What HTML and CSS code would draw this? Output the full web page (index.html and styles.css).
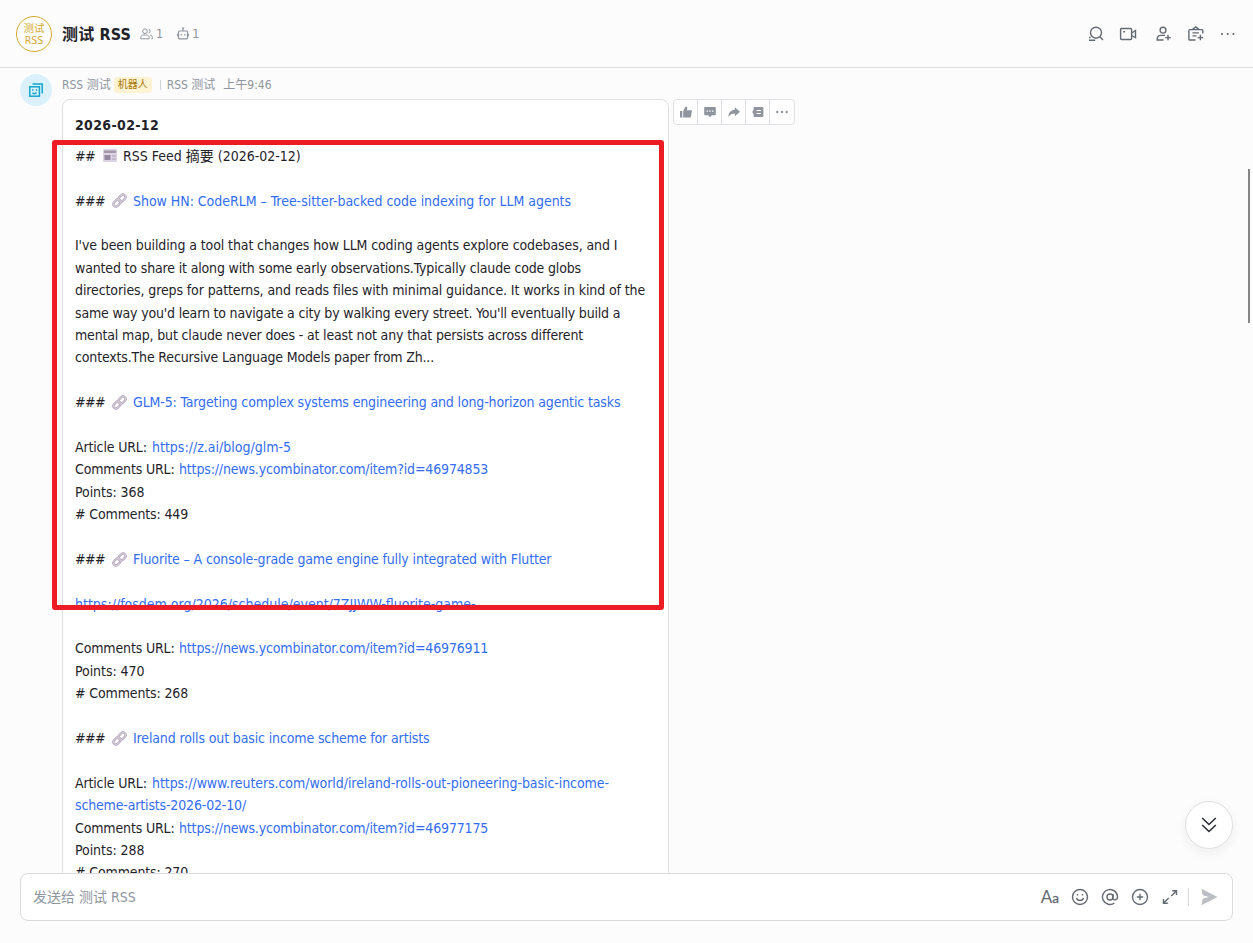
FILE: index.html
```html
<!DOCTYPE html>
<html lang="zh-CN">
<head>
<meta charset="utf-8">
<title>测试 RSS</title>
<link rel="stylesheet" href="styles.css">
</head>
<body>
<svg class="defs" width="0" height="0" aria-hidden="true">
  <symbol id="link" viewBox="0 0 15 15"><g fill="none" stroke-linecap="round"><g stroke="#a99bb1" stroke-width="2.200"><rect x="6" y="2.600" width="8" height="5" rx="2.500" transform="rotate(-45 10 5.100)"/><rect x="1" y="7.400" width="8" height="5" rx="2.500" transform="rotate(-45 5 9.900)"/></g><g stroke="#d3c8d9" stroke-width="1.200"><rect x="6" y="2.600" width="8" height="5" rx="2.500" transform="rotate(-45 10 5.100)"/><rect x="1" y="7.400" width="8" height="5" rx="2.500" transform="rotate(-45 5 9.900)"/></g></g></symbol>
</svg>
<header class="header">
  <div class="group-avatar"><span>测试</span><span>RSS</span></div>
  <h1 class="title">测试 RSS</h1>
  <div class="count members">
    <svg width="13" height="12" viewBox="0 0 13 12" fill="none" stroke="#8f959e"><circle cx="5" cy="3.200" r="2.300"/><path d="M.8 10.800V9.600c0-1.700 1.200-2.600 2.800-2.600h2.800c1.600 0 2.800.9 2.800 2.600v1.200zM8.600 1.200a2 2 0 0 1 0 3.900M10.200 7.200c1.400.2 2.200 1.100 2.200 2.300v1.300h-1"/></svg><span>1</span>
  </div>
  <div class="count bots">
    <svg width="12" height="13" viewBox="0 0 12 13" fill="none" stroke="#8f959e" stroke-width="1.200"><rect x="1.500" y="4" width="9" height="7.800" rx="1"/><path d="M6 4V.8M4.800 1h2.400M.5 6.800v2.400M11.500 6.800v2.400M4.200 7v1.500M7.800 7v1.500"/></svg><span>1</span>
  </div>
  <nav class="actions">
    <svg width="18" height="18" viewBox="0 0 18 18"><circle cx="9" cy="7.700" r="5.500"/><path d="M12.900 11.800 16 14.900M2 12.500h1.600M2 15.300h6.200"/></svg>
    <svg width="18" height="18" viewBox="0 0 18 18"><rect x="1.600" y="3.500" width="11" height="11" rx="1"/><path d="M12.600 8 16.500 5.500v7l-3.900-2M4.300 6.700h1.800"/></svg>
    <svg width="18" height="18" viewBox="0 0 18 18"><circle cx="8" cy="5.200" r="2.900"/><path d="M8.500 15H2.200v-1c0-2.400 1.600-3.600 3.800-3.600h4M13 9.800v5.500M10.200 12.600h5.600"/></svg>
    <svg width="18" height="18" viewBox="0 0 18 18"><path d="M8.500 15H2.700c-.5 0-.8-.3-.8-.8V5.400c0-.5.300-.8.800-.8h12.300c.5 0 .8.300.8.800v3M5.300 4.600 8.700 2l3.500 2.600M5.500 7.900h6.400M5.500 10.900h4M13.400 9.800v5.500M10.600 12.600h5.600"/></svg>
    <svg width="18" height="18" viewBox="0 0 18 18"><g class="solid"><circle cx="3" cy="9" r="1.100"/><circle cx="8.700" cy="9" r="1.100"/><circle cx="14.400" cy="9" r="1.100"/></g></svg>
  </nav>
</header>
<main class="feed">
  <div class="bot-avatar"><svg width="16" height="16" viewBox="0 0 16 16" fill="none" stroke="#14a5cf" stroke-width="1.500"><path d="M4.500 2h9.700v9.500"/><rect x="1.800" y="4.800" width="9.600" height="9.400"/><path d="M4 8h1.500M7.800 8h1.500M4.400 10.800c1.500 1.200 3 1.200 4.200-.2"/></svg></div>
  <section class="message">
    <div class="meta"><span>RSS 测试</span><span class="badge">机器人</span><i class="bar"></i><span>RSS 测试</span><time>上午9:46</time></div>
    <div class="row">
      <article class="card">
        <h2>2026-02-12</h2>
        <p><span class="h">##</span><svg class="news" width="14" height="13" viewBox="0 0 14 13"><rect width="14" height="13" rx="1" fill="#ddd4e3"/><path d="M1 1.500h12v2.500H1z" fill="#a397ab"/><path d="M1.500 6h6v5h-6z" fill="#94899e"/><path d="M9 6h4v2H9zM9 9h4v2H9z" fill="#c3b9cb"/></svg><span>RSS Feed 摘要 (2026-02-12)</span></p>
        <p></p>
        <p><span class="h">###</span><svg class="chain"><use href="#link"/></svg><a class="t1">Show HN: CodeRLM – Tree-sitter-backed code indexing for LLM agents</a></p>
        <p></p>
        <p><span class="t3">I've been building a tool that changes how LLM coding agents explore codebases, and I</span></p>
        <p><span class="t5">wanted to share it along with some early observations.Typically claude code globs</span></p>
        <p><span class="t3">directories, greps for patterns, and reads files with minimal guidance. It works in kind of the</span></p>
        <p><span class="t6">same way you'd learn to navigate a city by walking every street. You'll eventually build a</span></p>
        <p><span class="t5">mental map, but claude never does - at least not any that persists across different</span></p>
        <p><span class="t5">contexts.The Recursive Language Models paper from Zh...</span></p>
        <p></p>
        <p><span class="h">###</span><svg class="chain"><use href="#link"/></svg><a class="t4">GLM-5: Targeting complex systems engineering and long-horizon agentic tasks</a></p>
        <p></p>
        <p><span class="k article">Article URL:</span><a>https://z.ai/blog/glm-5</a></p>
        <p><span class="k">Comments URL:</span><a class="t5">https://news.ycombinator.com/item?id=46974853</a></p>
        <p><span class="t2">Points: 368</span></p>
        <p><span class="t4"># Comments: 449</span></p>
        <p></p>
        <p><span class="h">###</span><svg class="chain"><use href="#link"/></svg><a class="t4">Fluorite – A console-grade game engine fully integrated with Flutter</a></p>
        <p></p>
        <p><a>https://fosdem.org/2026/schedule/event/7ZJJWW-fluorite-game-</a></p>
        <p></p>
        <p><span class="k">Comments URL:</span><a class="t5">https://news.ycombinator.com/item?id=46976911</a></p>
        <p><span class="t2">Points: 470</span></p>
        <p><span class="t4"># Comments: 268</span></p>
        <p></p>
        <p><span class="h">###</span><svg class="chain"><use href="#link"/></svg><a class="t4">Ireland rolls out basic income scheme for artists</a></p>
        <p></p>
        <p><span class="k article">Article URL:</span><a class="t2">https://www.reuters.com/world/ireland-rolls-out-pioneering-basic-income-</a></p>
        <p><a class="t5">scheme-artists-2026-02-10/</a></p>
        <p><span class="k">Comments URL:</span><a class="t5">https://news.ycombinator.com/item?id=46977175</a></p>
        <p><span class="t2">Points: 288</span></p>
        <p><span class="t4"># Comments: 270</span></p>
      </article>
      <div class="toolbar">
        <span><svg width="12" height="12" viewBox="0 0 12 12"><path d="M0 5h2.300v6.500H0zM3.200 5 5.500.5c1.400 0 2 .9 1.700 2.200L7 4.200h4c.6 0 1 .5.9 1.100l-1 5.400c-.1.500-.5.800-1 .8H3.200z"/></svg></span>
        <span><svg width="12" height="12" viewBox="0 0 12 12"><path fill-rule="evenodd" d="M1 1h10c.5 0 .8.300.8.800v6.600c0 .5-.3.800-.8.800H7.800L6 11.200 4.200 9.200H1c-.5 0-.8-.3-.8-.8V1.800C.2 1.300.5 1 1 1zm1.500 3.400v1.400h1.400V4.400zm2.800 0v1.400h1.400V4.400zm2.800 0v1.400h1.400V4.400z"/></svg></span>
        <span><svg width="12" height="12" viewBox="0 0 12 12"><path d="M6.800 1.200 12 5.700l-5.200 4.500V7.500C4 7.500 2 8.500.4 11 .4 7 2.500 4.200 6.800 3.800z"/></svg></span>
        <span><svg width="12" height="12" viewBox="0 0 12 12"><path fill-rule="evenodd" d="M2.500 1h8c.5 0 .9.400.9.900v8.200c0 .5-.4.900-.9.900h-8c-.5 0-.9-.4-.9-.9V8L.2 6l1.400-2V1.900c0-.5.400-.9.900-.9zM4.500 4v1h4.500V4zm0 3v1h4.500V7z"/></svg></span>
        <span><svg width="12" height="12" viewBox="0 0 12 12"><circle cx="1.300" cy="6" r="1.200"/><circle cx="6" cy="6" r="1.200"/><circle cx="10.700" cy="6" r="1.200"/></svg></span>
      </div>
    </div>
  </section>
  <div class="highlight"></div>
</main>
<footer class="composer">
  <span class="placeholder">发送给 测试 RSS</span>
  <div class="tools">
    <span class="aa">A<small>a</small></span>
    <svg width="18" height="18" viewBox="0 0 18 18"><circle cx="9" cy="9" r="7.500"/><path d="M5.500 10c.8 3.200 6.200 3.200 7 0M6.500 6v1.400M11.500 6v1.400"/></svg>
    <svg width="18" height="18" viewBox="0 0 18 18"><circle cx="9" cy="9" r="3"/><path d="M12 6v4.500c0 2 4.500 2 4.500-1.500A7.500 7.500 0 1 0 13.500 15"/></svg>
    <svg width="18" height="18" viewBox="0 0 18 18"><circle cx="9" cy="9" r="7.500"/><path d="M9 5.800v6.400M5.800 9h6.400"/></svg>
    <svg width="18" height="18" viewBox="0 0 18 18"><path d="M11.200 2.800h4.300v4.300M15.300 3l-5 5M6.800 15.200H2.500v-4.300M2.700 15l5-5"/></svg>
  </div>
  <i class="sep"></i>
  <svg class="send" width="18" height="18" viewBox="0 0 18 18"><path d="M1.500.8 17.500 9l-16 8.200 1.200-6.500L9 9 2.700 7.300z" fill="#bbbfc4"/></svg>
</footer>
<div class="scroll-thumb"></div>
<div class="jump"><svg width="16" height="18" viewBox="0 0 16 18"><path d="m1.200 2 6.800 6.500L14.800 2M1.200 9l6.800 6.500L14.800 9"/></svg></div>
</body>
</html>
```
FILE: styles.css
```css
* { box-sizing: border-box; }
body { margin: 0; width: 1253px; height: 943px; display: flex; flex-direction: column; overflow: hidden; position: relative; background: #fcfcfc; color: #1f2329; font: 14px/22.4px "DejaVu Sans Condensed", "Noto Sans CJK SC", sans-serif; }
.defs { position: absolute; }
svg { display: block; flex: none; }
h1, h2, p { margin: 0; }
.header { flex: none; height: 68px; border-bottom: 1px solid #dcdee0; display: flex; align-items: center; padding: 0 16px; }
.group-avatar { width: 36px; height: 36px; border: 1px solid #d4a72c; border-radius: 50%; background: #fff; color: #d4a72c; font-size: 10.5px; line-height: 12px; display: flex; flex-direction: column; align-items: center; justify-content: center; }
.title { margin-left: 10px; padding-top: 4px; font-size: 16px; letter-spacing: .15px; white-space: nowrap; width: 70px; }
.count { display: flex; align-items: center; gap: 3px; color: #8f959e; font-size: 12.5px; }
.count span { padding-top: 2px; }
.members { margin-left: 8px; }
.bots { margin-left: 14px; }
.actions { margin-left: auto; display: flex; gap: 14px; }
.actions svg:nth-child(3) { margin-left: 4px; }
.actions svg, .tools svg { fill: none; stroke: #646a73; stroke-width: 1.4; }
.actions .solid { fill: #646a73; stroke: none; }
.feed { flex: none; height: 805px; overflow: hidden; position: relative; display: flex; padding: 6px 0 0 20px; }
.bot-avatar { flex: none; width: 32px; height: 32px; border-radius: 50%; background: #daf1fb; display: flex; align-items: center; justify-content: center; }
.message { margin-left: 10px; }
.meta { height: 21px; display: flex; align-items: center; color: #8f959e; font-size: 12px; white-space: nowrap; }
.meta > span:not(.badge), .meta time { padding-top: 2px; }
.badge { margin-left: 3px; padding: 0 4px; width: 38px; height: 16px; line-height: 16px; border-radius: 3px; background: #fdf3d3; color: #a87400; font-size: 10px; }
.bar { width: 1px; height: 10px; background: #d0d3d6; margin: 0 6px 0 8px; }
.meta time { margin-left: 8px; }
.row { display: flex; align-items: flex-start; margin-top: 4px; }
.card { width: 607px; height: 900px; background: #fff; border: 1px solid #dee0e3; border-radius: 8px; padding: 14px 12px 0; }
.card h2 { font-size: 14px; line-height: 22px; height: 30.8px; letter-spacing: .35px; }
.card p { display: flex; align-items: center; height: 22.4px; white-space: nowrap; }
.card a { color: #336df4; }
.h { width: 30px; letter-spacing: -.6px; }
.chain { width: 15px; height: 15px; margin: 0 6px 0 7px; }
.news { margin: 0 6px 0 -2px; }
.k { width: 104px; letter-spacing: -.15px; }
.article { width: 77px; }
.t1 { letter-spacing: -.03px; }
.t2 { letter-spacing: -.065px; }
.t3 { letter-spacing: -.108px; }
.t4 { letter-spacing: -.135px; }
.t5 { letter-spacing: -.158px; }
.t6 { letter-spacing: -.178px; }
.toolbar { margin-left: 4px; display: flex; height: 26px; border: 1px solid #dee0e3; border-radius: 4px; background: #fff; }
.toolbar span { width: 24px; display: flex; align-items: center; justify-content: center; }
.toolbar span:first-child { width: 23px; }
.toolbar span:last-child { width: 25px; }
.toolbar span + span { border-left: 1px solid #dee0e3; }
.toolbar svg { fill: #8f959e; }
.highlight { position: absolute; left: 52px; top: 72px; width: 612px; height: 470px; border: 5px solid #ed1c24; border-radius: 3px; }
.composer { flex: none; width: 1213px; height: 48px; margin-left: 20px; border: 1px solid #d9dbde; border-radius: 8px; background: #fff; display: flex; align-items: center; padding: 0 14px 0 12px; }
.placeholder { color: #8f959e; padding-top: 1px; }
.tools { margin-left: auto; display: flex; align-items: center; gap: 12px; }
.aa { color: #646a73; font: 17px/20px Lato, sans-serif; }
.aa small { font-size: 13.5px; -webkit-text-stroke: .3px #646a73; }
.sep { width: 1px; height: 18px; margin: 0 11px 0 9px; background: #d9dbde; }
.scroll-thumb { position: absolute; left: 1248px; top: 169px; width: 2px; height: 154px; background: #858585; }
.jump { position: absolute; left: 1185px; top: 801px; width: 48px; height: 48px; border: 1px solid #dee0e3; border-radius: 50%; background: #fff; box-shadow: 0 4px 12px rgba(31, 35, 41, .06); display: flex; align-items: center; justify-content: center; }
.jump svg { fill: none; stroke: #2b2f36; stroke-width: 1.6; }
```
